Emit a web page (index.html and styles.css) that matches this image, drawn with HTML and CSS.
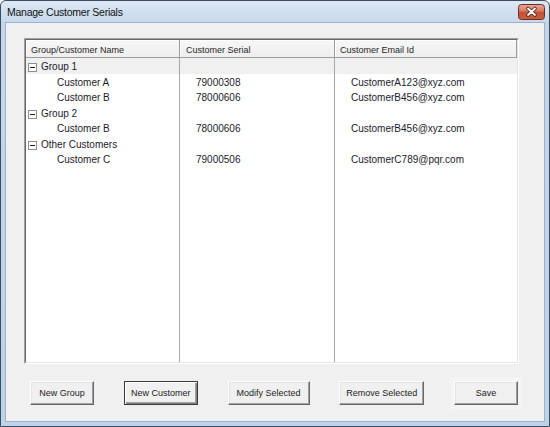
FILE: index.html
```html
<!DOCTYPE html>
<html>
<head>
<meta charset="utf-8">
<title>Manage Customer Serials</title>
<link rel="stylesheet" href="styles.css">
</head>
<body>
<div class="window">
  <div class="titlebar">
    <span class="title">Manage Customer Serials</span>
    <span class="close">
      <svg width="27" height="16" viewBox="0 0 27 16">
        <defs>
          <linearGradient id="cg" x1="0" y1="0" x2="0" y2="1">
            <stop offset="0" stop-color="#e9a99a"/>
            <stop offset="0.45" stop-color="#d7775f"/>
            <stop offset="0.5" stop-color="#c84e35"/>
            <stop offset="1" stop-color="#c8603f"/>
          </linearGradient>
        </defs>
        <rect x="0.5" y="0.5" width="26" height="15" rx="3" fill="url(#cg)" stroke="#6d2c24"/>
        <path d="M10 4.5L17 11M17 4.5L10 11" stroke="#4a2a26" stroke-width="3.6" stroke-linecap="round"/>
        <path d="M10 4.5L17 11M17 4.5L10 11" stroke="#ffffff" stroke-width="1.8" stroke-linecap="round"/>
      </svg>
    </span>
  </div>
  <div class="client">
    <div class="list">
      <div class="grid">
        <div class="hd">Group/Customer Name</div>
        <div class="hd">Customer Serial</div>
        <div class="hd">Customer Email Id</div>

        <div class="c c1 grp sel"><svg class="tog" width="9" height="9" viewBox="0 0 9 9"><rect x="0.5" y="0.5" width="8" height="8" fill="#fff" stroke="#8f8f8f"/><path d="M2 4.5h5" stroke="#1a1a1a"/></svg>Group 1</div>
        <div class="c c2 sel"></div>
        <div class="c c3 sel"></div>

        <div class="c c1 cust">Customer A</div>
        <div class="c c2 val">79000308</div>
        <div class="c c3 val">CustomerA123@xyz.com</div>

        <div class="c c1 cust">Customer B</div>
        <div class="c c2 val">78000606</div>
        <div class="c c3 val">CustomerB456@xyz.com</div>

        <div class="c c1 grp"><svg class="tog" width="9" height="9" viewBox="0 0 9 9"><rect x="0.5" y="0.5" width="8" height="8" fill="#fff" stroke="#8f8f8f"/><path d="M2 4.5h5" stroke="#1a1a1a"/></svg>Group 2</div>
        <div class="c c2"></div>
        <div class="c c3"></div>

        <div class="c c1 cust">Customer B</div>
        <div class="c c2 val">78000606</div>
        <div class="c c3 val">CustomerB456@xyz.com</div>

        <div class="c c1 grp"><svg class="tog" width="9" height="9" viewBox="0 0 9 9"><rect x="0.5" y="0.5" width="8" height="8" fill="#fff" stroke="#8f8f8f"/><path d="M2 4.5h5" stroke="#1a1a1a"/></svg>Other Customers</div>
        <div class="c c2"></div>
        <div class="c c3"></div>

        <div class="c c1 cust">Customer C</div>
        <div class="c c2 val">79000506</div>
        <div class="c c3 val">CustomerC789@pqr.com</div>

        <div class="c c1"></div>
        <div class="c c2"></div>
        <div class="c c3"></div>
      </div>
    </div>
    <div class="buttons">
      <button class="btn w-group">New Group</button>
      <button class="btn btn-default w-cust">New Customer</button>
      <button class="btn w-modify">Modify Selected</button>
      <button class="btn w-remove">Remove Selected</button>
      <button class="btn btn-save w-save">Save</button>
    </div>
  </div>
</div>
</body>
</html>
```

FILE: styles.css
```css
html, body {
  margin: 0;
  padding: 0;
  background: #ffffff;
}
body {
  font-family: "Liberation Sans", Arial, sans-serif;
  color: #1b1b24;
}
.window {
  box-sizing: border-box;
  width: 550px;
  height: 427px;
  border: 1px solid #3e4b5d;
  border-radius: 6px 6px 0 0;
  padding: 0 4px 4px 4px;
  background: linear-gradient(to bottom, #dde8f5 0px, #cfdef0 12px, #c7d9ee 21px, #c3d6ec 21px, #bdd3ea 100%);
  display: flex;
  flex-direction: column;
}
.titlebar {
  height: 21px;
  display: flex;
  align-items: center;
  justify-content: space-between;
  padding: 0 0 0 2px;
}
.title {
  font-size: 10.5px;
  letter-spacing: -0.25px;
  color: #111;
}
.close {
  display: block;
  width: 27px;
  height: 16px;
}
.close svg { display: block; }
.client {
  box-sizing: border-box;
  height: 400px;
  border: 1px solid #9fb2c9;
  background: #f0f0f0;
  padding: 15px 0 0 18px;
}
.list {
  box-sizing: border-box;
  width: 495px;
  height: 326px;
  border: 1px solid;
  border-color: #a0a0a0 #ffffff #ffffff #a0a0a0;
  background: #fff;
}
.grid {
  box-sizing: border-box;
  height: 100%;
  border: 1px solid;
  border-color: #696969 #e3e3e3 #e3e3e3 #696969;
  display: grid;
  grid-template-columns: 154px 155px 182px;
  grid-template-rows: 18px repeat(7, 15.5px) 1fr;
  background: #fff;
}
.hd {
  box-sizing: border-box;
  font-size: 9px;
  color: #1e1e1e;
  background: linear-gradient(to bottom, #f7f7f7, #eeeeee);
  border-right: 1px solid #9c9c9c;
  border-bottom: 1px solid #9c9c9c;
  box-shadow: inset 1px 1px #ffffff;
  padding: 5px 0 0 5px;
  white-space: nowrap;
}
.hd:nth-child(2) { padding-left: 6px; }
.c {
  box-sizing: border-box;
  font-size: 10px;
  line-height: 15.5px;
  padding-top: 1px;
  white-space: nowrap;
  color: #1b1b2a;
}
.c1, .c2 { border-right: 1px solid #a8a8a8; }
.sel { background: #f0f0f0; }
.grp {
  display: flex;
  align-items: flex-start;
  padding-left: 2px;
}
.tog {
  display: block;
  margin-right: 4px;
  margin-top: 4px;
  flex: none;
}
.cust { padding-left: 31px; }
.val { padding-left: 16px; }
.buttons {
  width: 488px;
  margin: 17px 0 0 6px;
  display: flex;
  justify-content: space-between;
}
.btn {
  box-sizing: border-box;
  height: 24px;
  padding: 0;
  margin: 0;
  font-family: "Liberation Sans", Arial, sans-serif;
  font-size: 9px;
  color: #1b1b24;
  background: #f0f0f0;
  border: 1px solid;
  border-color: #ffffff #696969 #696969 #ffffff;
  box-shadow: inset -1px -1px #a0a0a0, inset 1px 1px #e3e3e3;
}
.btn-default {
  border-color: #3a3a3a;
  box-shadow: inset 1px 1px #ffffff, inset -1px -1px #808080, inset -2px -2px #a0a0a0;
}
.btn-save {
  box-shadow: inset -1px -1px #a0a0a0, inset 1px 1px #e3e3e3, 0 0 0 4px #f4f4f4;
}
.w-group { width: 64px; }
.w-cust { width: 74px; }
.w-modify { width: 82px; }
.w-remove { width: 85px; }
.w-save { width: 64px; }
```
